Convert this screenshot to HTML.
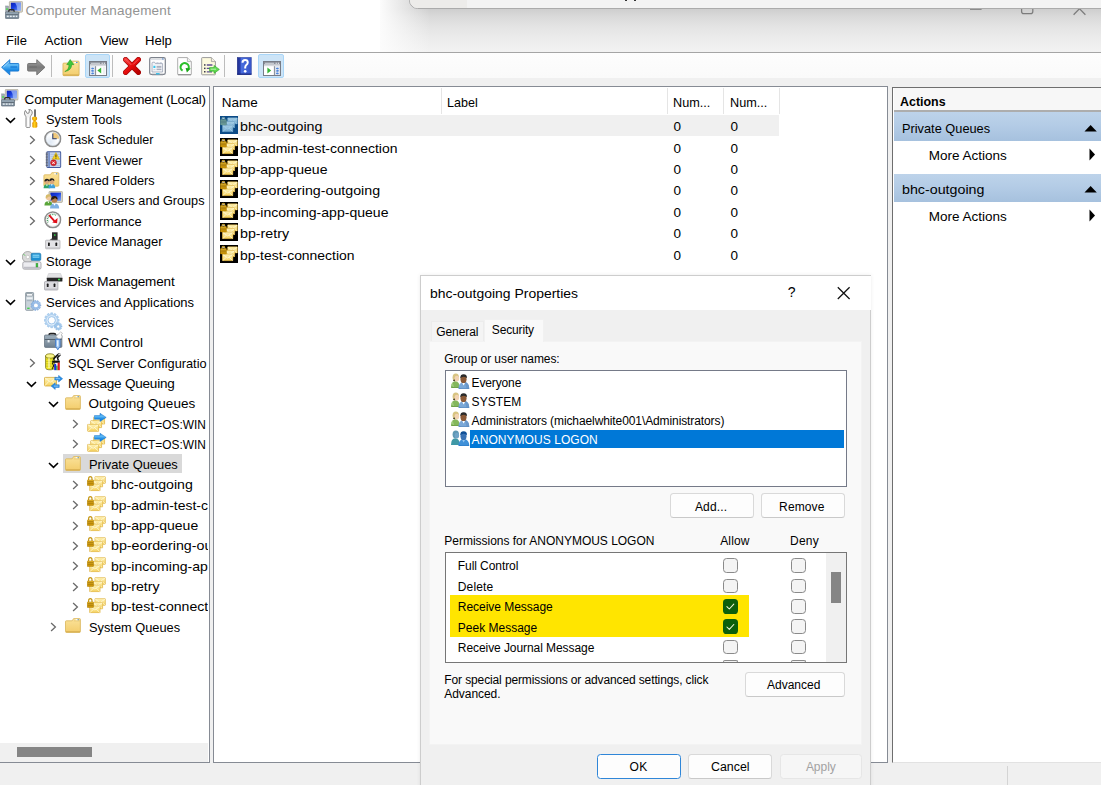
<!DOCTYPE html>
<html><head><meta charset="utf-8"><title>Computer Management</title>
<style>
html,body{margin:0;padding:0;}
body{width:1101px;height:785px;overflow:hidden;background:#fff;position:relative;font-family:"Liberation Sans",sans-serif;color:#000;}
.a{position:absolute;}
.t{position:absolute;white-space:pre;line-height:20px;height:20px;}
.clip{position:absolute;left:0;top:0;overflow:hidden;}
svg{position:absolute;overflow:visible;}
.btn{position:absolute;box-sizing:border-box;border:1px solid #d9d9d9;border-bottom-color:#c9c9c9;border-radius:3.5px;background:#fdfdfd;}
.cb{position:absolute;box-sizing:border-box;width:14.6px;height:14.6px;border:1.2px solid #8a8a8a;border-radius:3.6px;background:#f4f4f4;}
.cbg{position:absolute;box-sizing:border-box;width:14.6px;height:14.6px;border-radius:3.6px;background:#0c5f0c;}
</style></head><body>
<svg width="0" height="0" style="position:absolute;left:-10px;top:-10px">
<defs>
<linearGradient id="gScr" x1="0" y1="0" x2="1" y2="1"><stop offset="0" stop-color="#0a1fb8"/><stop offset=".45" stop-color="#1a3fe0"/><stop offset="1" stop-color="#7fa8f5"/></linearGradient>
<linearGradient id="gFold" x1="0" y1="0" x2="0" y2="1"><stop offset="0" stop-color="#fae29a"/><stop offset="1" stop-color="#f3cd6c"/></linearGradient>
<linearGradient id="gEnv" x1="0" y1="0" x2="0" y2="1"><stop offset="0" stop-color="#fff4b8"/><stop offset="1" stop-color="#f5d15c"/></linearGradient>
<linearGradient id="gEnvB" x1="0" y1="0" x2="0" y2="1"><stop offset="0" stop-color="#a8cfe4"/><stop offset="1" stop-color="#6fa5cc"/></linearGradient>
<linearGradient id="gBlueA" x1="0" y1="0" x2="0" y2="1"><stop offset="0" stop-color="#2c8ce0"/><stop offset=".35" stop-color="#62bcf7"/><stop offset=".7" stop-color="#1787e4"/><stop offset="1" stop-color="#2c8ce0"/></linearGradient>
<linearGradient id="gGrayA" x1="0" y1="0" x2="0" y2="1"><stop offset="0" stop-color="#a4a4a4"/><stop offset=".5" stop-color="#7a7a7a"/><stop offset="1" stop-color="#969696"/></linearGradient>
<linearGradient id="gHelp" x1="0" y1="0" x2="1" y2="0"><stop offset="0" stop-color="#1f2f8f"/><stop offset=".22" stop-color="#2a3fae"/><stop offset=".25" stop-color="#4a6fe0"/><stop offset="1" stop-color="#3553c8"/></linearGradient>
<linearGradient id="gRed" x1="0" y1="0" x2="1" y2="1"><stop offset="0" stop-color="#f43a3a"/><stop offset=".5" stop-color="#e60d0d"/><stop offset="1" stop-color="#b80000"/></linearGradient>
<linearGradient id="gLock" x1="0" y1="0" x2="0" y2="1"><stop offset="0" stop-color="#f0c030"/><stop offset="1" stop-color="#c89000"/></linearGradient>
<linearGradient id="gBox" x1="0" y1="0" x2="0" y2="1"><stop offset="0" stop-color="#9fb0bd"/><stop offset="1" stop-color="#6f8090"/></linearGradient>
<linearGradient id="gHand" x1="0" y1="0" x2="1" y2="0"><stop offset="0" stop-color="#e39300"/><stop offset=".45" stop-color="#ffd21a"/><stop offset="1" stop-color="#dd8a00"/></linearGradient>
<radialGradient id="gFace" cx=".35" cy=".7" r=".8"><stop offset="0" stop-color="#dfe9f5"/><stop offset=".6" stop-color="#fff"/><stop offset="1" stop-color="#fff"/></radialGradient>

<!-- chevrons -->
<symbol id="chd" viewBox="0 0 11 7"><path d="M1 1L5.5 5.4L10 1" fill="none" stroke="#000" stroke-width="1.6"/></symbol>
<symbol id="chr" viewBox="0 0 7 10"><path d="M1.1 1L5.4 5L1.1 9" fill="none" stroke="#6a6a6a" stroke-width="1.3"/></symbol>

<!-- computer management -->
<symbol id="cm" viewBox="0 0 18 18">
<rect x="4.4" y=".4" width="13.2" height="10.8" rx=".8" fill="#dbd7c8" stroke="#a8a496" stroke-width=".7"/>
<rect x="5.9" y="1.7" width="10.2" height="7.9" fill="url(#gScr)"/>
<path d="M10.2 1.7H16.1V9.6H12.4Q12.6 5 10.2 1.7Z" fill="#9db8f7" opacity=".75"/>
<rect x="9" y="11.2" width="5.5" height="1.4" fill="#8a8a8a"/>
<rect x=".6" y="5" width="3" height="6.4" fill="#a2abb4" stroke="#7d8790" stroke-width=".4"/><rect x="1.1" y="7.4" width="2" height="1.5" fill="#4fdc4f"/>
<path d="M3.8 11.2V10Q3.8 8.8 5 8.8H8Q9.2 8.8 9.2 10V11.2" fill="none" stroke="#2a2a2a" stroke-width="1.3"/>
<rect x=".4" y="11" width="13.4" height="6.7" rx=".8" fill="url(#gBox)" stroke="#5e6b77" stroke-width=".7"/>
<rect x=".8" y="13.4" width="12.6" height=".8" fill="#55616c"/>
<rect x="1.8" y="14.7" width="2" height="1.5" fill="#e8eef2"/><rect x="4.8" y="14.7" width="2" height="1.5" fill="#e8eef2"/><rect x="7.8" y="14.7" width="2" height="1.5" fill="#e8eef2"/><rect x="10.8" y="14.7" width="1.6" height="1.5" fill="#e8eef2"/>
</symbol>

<!-- system tools -->
<symbol id="tools" viewBox="0 0 14 19">
<path d="M2 17.6V8.6Q2 7.4 1.2 6.4Q.2 5 .5 3.2L1.4 1.4L3.2 4.4L5 4L5.4 1L4.6 .4Q7.6 .2 8.2 2.8Q8.6 5 7 6.6Q6.2 7.6 6.2 8.8V17.6Q6.2 18.7 4.1 18.7Q2 18.7 2 17.6Z" fill="#f1f1f1" stroke="#8a8a8a" stroke-width="1" stroke-linejoin="round"/>
<path d="M4.2 8.4V17.4" stroke="#fff" stroke-width="1.4"/>
<rect x="10.1" y=".4" width="1.8" height="7.6" fill="#646464"/>
<rect x="8.1" y="7.8" width="5" height="3.6" rx="1.4" fill="url(#gHand)"/>
<rect x="9.4" y="10.8" width="2.4" height="2.4" fill="#e8a000"/>
<rect x="8.3" y="12.6" width="5" height="6.2" rx="1.6" fill="url(#gHand)"/>
</symbol>

<!-- clock -->
<symbol id="clock" viewBox="0 0 18 18">
<circle cx="9" cy="9" r="8" fill="url(#gFace)" stroke="#8d8d8d" stroke-width="1.7"/>
<path d="M9 9V2.2A6.8 6.8 0 0 1 15.8 9Z" fill="#f0c97d"/>
<circle cx="9" cy="9" r="6.9" fill="none" stroke="#c9d3dd" stroke-width=".6"/>
<path d="M9 3.6V9H13" fill="none" stroke="#2a3a6a" stroke-width="1.1"/>
</symbol>

<!-- folder -->
<symbol id="folder" viewBox="0 0 16 15">
<path d="M.5 3.6Q.5 2.8 1.3 2.8H7.2L8.6 .6H14.6Q15.4 .6 15.4 1.4V13.6Q15.4 14.4 14.6 14.4H1.3Q.5 14.4 .5 13.6Z" fill="url(#gFold)" stroke="#d9b55a" stroke-width=".8"/>
<path d="M8.9 2.9H15" stroke="#e3c26a" stroke-width=".7"/>
<rect x="10.6" y="1.2" width="2.2" height="1" fill="#fff"/><rect x="12.6" y="1.2" width="1.2" height="1" fill="#3f8be0"/>
<path d="M1 13.8H15" stroke="#d2a84a" stroke-width=".9"/>
</symbol>
<!-- event viewer -->
<symbol id="evt" viewBox="0 0 17 18">
<rect x="1.8" y=".7" width="14.4" height="16.4" rx="1" fill="#c9d7ee" stroke="#42599c" stroke-width="1.1"/>
<rect x="3.4" y="1.3" width="1.4" height="15.2" fill="#5a76b8"/>
<g stroke="#9fb3da" stroke-width=".6"><path d="M5.5 3.5H15.5M5.5 5.8H15.5M5.5 8.1H15.5M5.5 10.4H15.5M5.5 12.7H15.5M5.5 15H15.5"/></g>
<g stroke="#555" stroke-width=".7"><path d="M.6 2.2H3M.6 3.8H3M.6 5.4H3M.6 7H3M.6 8.6H3M.6 10.2H3M.6 11.8H3M.6 13.4H3M.6 15H3"/></g>
<path d="M11.2 1.5L15 8.6H7.4Z" fill="#f6d21c" stroke="#c9a400" stroke-width=".5" stroke-linejoin="round"/>
<rect x="10.8" y="3.6" width=".9" height="2.8" fill="#222"/><rect x="10.8" y="7" width=".9" height=".9" fill="#222"/>
<circle cx="8.7" cy="12.2" r="3.1" fill="#d8242c" stroke="#a01018" stroke-width=".4"/>
<path d="M7.4 10.9L10 13.5M10 10.9L7.4 13.5" stroke="#fff" stroke-width="1"/>
</symbol>

<!-- person shapes are drawn inline per icon -->
<!-- shared folders -->
<symbol id="shared" viewBox="0 0 17 17">
<path d="M.9 3.6Q.9 2.8 1.7 2.8H7.4L8.8 .7H15Q15.8 .7 15.8 1.5V13.4Q15.8 14.2 15 14.2H1.7Q.9 14.2 .9 13.4Z" fill="url(#gFold)" stroke="#d9b55a" stroke-width=".8"/>
<rect x="11" y="1.3" width="2.2" height="1" fill="#fff"/><rect x="13" y="1.3" width="1.2" height="1" fill="#3f8be0"/>
<path d="M.6 16.3Q.6 12.2 3.9 12.2Q7.2 12.2 7.2 16.3Z" fill="#2fa56a"/>
<path d="M5.4 16.3Q5.4 12 8.8 12Q12.2 12 12.2 16.3Z" fill="#3f9fd8"/>
<path d="M2.9 12.4L3.9 14.2L4.9 12.4Z" fill="#fff"/><path d="M7.8 12.2L8.8 14L9.8 12.2Z" fill="#fff"/>
<circle cx="3.9" cy="9.8" r="2.4" fill="#d9a77c"/><path d="M1.4 9.6Q1.4 6.8 3.9 6.8Q6.4 6.8 6.4 9.4Q5 9 4.4 8.2Q3 9.4 1.4 9.6Z" fill="#1d1d1d"/>
<circle cx="8.8" cy="9.4" r="2.5" fill="#d9a77c"/><path d="M6.2 9.2Q6.2 6.3 8.8 6.3Q11.4 6.3 11.4 9Q10 8.6 9.4 7.8Q7.9 9 6.2 9.2Z" fill="#1d1d1d"/>
</symbol>

<!-- local users and groups -->
<symbol id="lusr" viewBox="0 0 19 18">
<rect x="5" y=".4" width="13.4" height="11" rx=".8" fill="#d9d5c6" stroke="#a39f90" stroke-width=".7"/>
<rect x="6.4" y="1.6" width="10.6" height="8.2" fill="url(#gScr)"/>
<path d="M.4 14.6Q.4 10.2 4.4 10.2Q8.4 10.2 8.4 14.6Z" fill="#5aa63a"/>
<circle cx="4.6" cy="6.6" r="2.7" fill="#f0c9a0"/><path d="M1.7 7.4Q1.2 3.2 4.6 3.2Q8 3.2 7.4 7Q6 6.4 5.2 5.2Q3.6 6.8 1.7 7.4Z" fill="#d6bb6a"/>
<path d="M3.4 10.4L4.4 12.2L5.4 10.4Z" fill="#fff"/>
<path d="M6 17.6Q6 12.4 10.6 12.4Q15.2 12.4 15.2 17.6Z" fill="#7eb0e2"/>
<circle cx="10.4" cy="8.8" r="3" fill="#b9804f"/><path d="M7.2 9Q7 5 10.4 5Q13.8 5 13.6 8.6Q12 8.2 11.2 7Q9.4 8.6 7.2 9Z" fill="#2a1a10"/>
<path d="M9.2 12.6L10.5 14.8L11.8 12.6Z" fill="#fff"/>
</symbol>

<!-- performance -->
<symbol id="perf" viewBox="0 0 18 18">
<circle cx="9" cy="9" r="8" fill="#fff" stroke="#8d8d8d" stroke-width="1.6"/>
<circle cx="9" cy="9" r="6.7" fill="none" stroke="#d8d8d8" stroke-width=".6"/>
<path d="M4.2 11.6A5.6 5.6 0 0 1 12.6 4.6" fill="none" stroke="#3f9a5a" stroke-width="1.5" stroke-dasharray=".8 .9"/>
<path d="M5.2 4.2L11.6 11.4" stroke="#e0101a" stroke-width="1.9"/>
<path d="M13.9 7.2L13.4 12.6L8.4 11.7Z" fill="#e0101a"/>
</symbol>

<!-- device manager -->
<symbol id="dev" viewBox="0 0 16 18">
<rect x="7" y=".3" width="5.6" height="8.6" fill="#2b2b2b"/><rect x="9" y="2.3" width="1.5" height="1.5" fill="#35d04a"/>
<path d="M4 8.4L7 6.2V8.6Z" fill="#444"/>
<rect x=".6" y="8.2" width="14.4" height="8.6" rx=".7" fill="#e3e3e6" stroke="#a9a9ad" stroke-width=".7"/>
<rect x="3" y="10.6" width="1.8" height="3.4" rx=".6" fill="#1d1d1d"/><rect x="10.4" y="10.6" width="1.8" height="3.4" rx=".6" fill="#1d1d1d"/>
<rect x=".9" y="15.4" width="13.8" height="1.2" fill="#c2c2c6"/>
</symbol>

<!-- storage -->
<symbol id="stor" viewBox="0 0 20 19">
<circle cx="5.8" cy="6" r="5.5" fill="#d9d9d9" stroke="#9a9a9a" stroke-width=".8"/><circle cx="5.8" cy="6" r="1.7" fill="#fff" stroke="#aaa" stroke-width=".5"/>
<path d="M1.6 3.2L3 4.6" stroke="#4fc84f" stroke-width="1"/>
<rect x="9.2" y="2.2" width="9.6" height="7.4" rx="1.4" fill="#1f8fd0" stroke="#1670a8" stroke-width=".6"/>
<rect x="10.6" y="3.6" width="6.8" height="3.2" fill="#7fd0f2"/><rect x="10.6" y="4.9" width="6.8" height=".6" fill="#2a9ad8"/>
<rect x=".8" y="10.8" width="18.2" height="7.4" rx="1.6" fill="#ececf0" stroke="#9a9aa0" stroke-width=".8"/>
<rect x="1.4" y="15.8" width="17" height="2" rx="1" fill="#bfbfc6"/>
<rect x="14" y="12.4" width="1.9" height="3.6" fill="#3fc83f" stroke="#2a7a2a" stroke-width=".4"/>
</symbol>

<!-- disk management -->
<symbol id="disk" viewBox="0 0 19 18">
<path d="M4.6 .5H16.6L18.4 5H2.8Z" fill="#e2e2e4" stroke="#c2c2c6" stroke-width=".5"/>
<rect x="2.8" y="4.8" width="15.6" height="3.6" rx=".5" fill="#262626"/><rect x="14" y="5.7" width="2.2" height="1.6" fill="#35d04a"/>
<rect x=".5" y="8.6" width="13.4" height="8.4" rx=".7" fill="#dcdce0" stroke="#9c9ca2" stroke-width=".7"/>
<rect x="2.8" y="10.6" width="1.8" height="3.4" rx=".6" fill="#1d1d1d"/><rect x="9.6" y="10.6" width="1.8" height="3.4" rx=".6" fill="#1d1d1d"/>
<rect x=".8" y="15.6" width="12.8" height="1.2" fill="#bcbcc2"/>
</symbol>
<!-- services -->
<symbol id="svc" viewBox="0 0 19 19">
<path d="M15.14 7.32L15.14 9.28L13.61 9.33L13.33 10.36L14.63 11.17L13.65 12.87L12.30 12.15L11.55 12.90L12.27 14.25L10.57 15.23L9.76 13.93L8.73 14.21L8.68 15.74L6.72 15.74L6.67 14.21L5.64 13.93L4.83 15.23L3.13 14.25L3.85 12.90L3.10 12.15L1.75 12.87L0.77 11.17L2.07 10.36L1.79 9.33L0.26 9.28L0.26 7.32L1.79 7.27L2.07 6.24L0.77 5.43L1.75 3.73L3.10 4.45L3.85 3.70L3.13 2.35L4.83 1.37L5.64 2.67L6.67 2.39L6.72 0.86L8.68 0.86L8.73 2.39L9.76 2.67L10.57 1.37L12.27 2.35L11.55 3.70L12.30 4.45L13.65 3.73L14.63 5.43L13.33 6.24L13.61 7.27ZM11.40 8.30A3.7 3.7 0 1 0 4.00 8.30A3.7 3.7 0 1 0 11.40 8.30Z" fill="#b4d3f0" stroke="#8dbbe6" stroke-width=".5" fill-rule="evenodd"/>
<circle cx="7.7" cy="8.3" r="4.6" fill="none" stroke="#e4f0fb" stroke-width="1.1"/>
<circle cx="7.7" cy="8.3" r="3.7" fill="none" stroke="#8dbbe6" stroke-width=".5"/>
<path d="M18.04 13.72L18.04 15.08L17.02 15.06L16.79 15.71L17.58 16.35L16.71 17.39L15.94 16.72L15.34 17.07L15.53 18.06L14.20 18.30L14.04 17.30L13.36 17.18L12.87 18.06L11.69 17.39L12.21 16.51L11.77 15.99L10.82 16.35L10.36 15.08L11.32 14.74L11.32 14.06L10.36 13.72L10.82 12.45L11.77 12.81L12.21 12.29L11.69 11.41L12.87 10.74L13.36 11.62L14.04 11.50L14.20 10.50L15.53 10.74L15.34 11.73L15.94 12.08L16.71 11.41L17.58 12.45L16.79 13.09L17.02 13.74ZM15.70 14.40A1.5 1.5 0 1 0 12.70 14.40A1.5 1.5 0 1 0 15.70 14.40Z" fill="#a6caec" stroke="#7fb0e0" stroke-width=".4" fill-rule="evenodd"/>
</symbol>

<!-- services and applications -->
<symbol id="svcapp" viewBox="0 0 17 19">
<rect x=".6" y=".5" width="8" height="17.8" rx=".8" fill="#c9d3da" stroke="#7d8b96" stroke-width=".8"/>
<rect x="1.7" y="1.8" width="5.8" height="2.2" fill="#f4f7f9" stroke="#55616b" stroke-width=".4"/>
<rect x="1.7" y="5.4" width="5.8" height="1.6" fill="#eef2f5"/><rect x="1.7" y="8" width="5.8" height="1.2" fill="#aab6c0"/>
<rect x="2.2" y="15.6" width="2.4" height="1.4" fill="#3fd04a"/>
<path d="M15.85 12.69L15.85 14.11L14.53 14.09L14.33 14.78L15.45 15.48L14.68 16.67L13.58 15.95L13.04 16.42L13.60 17.61L12.31 18.20L11.78 16.99L11.07 17.10L10.90 18.40L9.49 18.20L9.70 16.90L9.04 16.60L8.20 17.61L7.12 16.67L8.00 15.69L7.61 15.09L6.35 15.48L5.95 14.11L7.22 13.76L7.22 13.04L5.95 12.69L6.35 11.32L7.61 11.71L8.00 11.11L7.12 10.13L8.20 9.19L9.04 10.20L9.70 9.90L9.49 8.60L10.90 8.40L11.07 9.70L11.78 9.81L12.31 8.60L13.60 9.19L13.04 10.38L13.58 10.85L14.68 10.13L15.45 11.32L14.33 12.02L14.53 12.71ZM12.80 13.40A1.9 1.9 0 1 0 9.00 13.40A1.9 1.9 0 1 0 12.80 13.40Z" fill="#9dc0ea" stroke="#6f9cd4" stroke-width=".5" fill-rule="evenodd"/>
<circle cx="10.9" cy="13.4" r="1.9" fill="#fff"/>
</symbol>

<!-- wmi control -->
<symbol id="wmi" viewBox="0 0 19 20">
<path d="M5 4.2Q5 2.6 6.6 2.6H10Q11.6 2.6 11.6 4.2" fill="none" stroke="#222" stroke-width="1.6"/>
<rect x=".5" y="4" width="17.4" height="12.4" rx="1" fill="url(#gBox)" stroke="#5b6a78" stroke-width=".7"/>
<rect x=".8" y="8" width="16.8" height="1" fill="#55626e"/>
<rect x="3.6" y="9" width="2" height="2.4" fill="#e9eef2"/>
<path d="M12 5.4L16.8 .8L18.6 2.4L17.4 3.2L18.2 6.4L15 8.4Z" fill="#fafafa" stroke="#9a9a9a" stroke-width=".5"/>
<path d="M11.6 8.2H16V15.4L13.8 18.8L11.6 15.4Z" fill="#9cc4f0" stroke="#3f78c8" stroke-width=".9"/>
<rect x="13" y="9.4" width="1.4" height="6" fill="#e6f1fc"/>
</symbol>

<!-- sql server config -->
<symbol id="sql" viewBox="0 0 16 18">
<path d="M.6 3V14.6Q.6 16.8 5 16.8Q9.4 16.8 9.4 14.6V3Z" fill="#f2ea2c" stroke="#6a6400" stroke-width=".7"/>
<ellipse cx="5" cy="3" rx="4.4" ry="2.2" fill="#fbf68a" stroke="#6a6400" stroke-width=".7"/>
<g stroke="#b8b010" stroke-width=".6"><path d="M1 6H9M1 8.4H9M1 10.8H9M1 13.2H9"/></g>
<rect x="3.4" y="5" width="1.2" height="10" fill="#fffde0" opacity=".8"/>
<path d="M8.2 6.4L11 3.4L13.6 1L14.8 2.2L12.4 4.8L13.4 7.6" fill="none" stroke="#111" stroke-width="1.5"/>
<rect x="13.2" y=".4" width="1.8" height="1.8" fill="#fff" stroke="#555" stroke-width=".4"/>
<rect x="7.2" y="7.6" width="7.6" height="2.2" fill="#111"/>
<rect x="9.2" y="10.8" width="2" height="6.4" fill="#1a2fe0"/><rect x="11.2" y="12.6" width="1.4" height="4.6" fill="#18a058"/><rect x="12.6" y="9.6" width="2.2" height="7.6" fill="#e0161c"/>
<path d="M7.4 9.8L8.6 13L7 16" stroke="#111" stroke-width="1" fill="none"/>
</symbol>

<!-- message queuing -->
<symbol id="msmq" viewBox="0 0 19 16">
<rect x=".5" y="2.4" width="12" height="8.6" rx=".6" fill="url(#gEnv)" stroke="#d6a93a" stroke-width=".8"/>
<path d="M1 3L6.5 7L12 3M1 10.6L5 6.2M12 10.6L8 6.2" fill="none" stroke="#fff7d0" stroke-width=".9"/>
<path d="M10.8 2.4H14.6V.4L18.6 3.7L14.6 7V5H10.8Z" fill="#2a8fe6" stroke="#1670c8" stroke-width=".5" stroke-linejoin="round"/>
<path d="M11.6 3.7H16" stroke="#bfe2fb" stroke-width=".7"/>
<path d="M15.2 9.8H11.2V7.8L7.2 11.1L11.2 14.4V12.4H15.2Z" fill="#2a8fe6" stroke="#1670c8" stroke-width=".5" stroke-linejoin="round"/>
<path d="M10 11.1H14.4" stroke="#bfe2fb" stroke-width=".7"/>
</symbol>

<!-- envelope (unit) -->
<symbol id="env" viewBox="0 0 12 8">
<rect x=".4" y=".4" width="11.2" height="7.2" rx=".5" fill="url(#gEnv)" stroke="#dcae3c" stroke-width=".8"/>
<path d="M.9 1L6 4.6L11.1 1M.9 7.2L4.6 3.8M11.1 7.2L7.4 3.8" fill="none" stroke="#fff9dc" stroke-width=".8"/>
</symbol>
<symbol id="envb" viewBox="0 0 12 8">
<rect x=".4" y=".4" width="11.2" height="7.2" rx=".5" fill="url(#gEnvB)" stroke="#5f95bd" stroke-width=".8"/>
<path d="M.9 1L6 4.6L11.1 1M.9 7.2L4.6 3.8M11.1 7.2L7.4 3.8" fill="none" stroke="#9fd0ee" stroke-width=".8"/>
</symbol>

<!-- outgoing queue -->
<symbol id="outq" viewBox="0 0 20 19">
<use href="#env" x="6.2" y="3.6" width="12" height="8"/>
<use href="#env" x="3.2" y="7.2" width="12" height="8"/>
<use href="#env" x=".2" y="10.8" width="12" height="8"/>
<path d="M7.4 2.6H13V.3L19.2 4.4L13 8.5V6.2H7.4Z" fill="url(#gBlueA)" stroke="#1a72c8" stroke-width=".5" stroke-linejoin="round"/>
</symbol>

<!-- private queue (lock + envelopes) -->
<symbol id="privq" viewBox="0 0 19 16">
<use href="#env" x="7.4" y=".2" width="11.4" height="7.6"/>
<use href="#env" x="4.8" y="3.8" width="11.4" height="7.6"/>
<use href="#env" x="2.2" y="7.6" width="11.4" height="7.6"/>
<path d="M1.6 4.4V2.8Q1.6 .7 3.3 .7Q5 .7 5 2.8V4.4" fill="none" stroke="#c79a1a" stroke-width="1.2"/>
<rect x=".2" y="4" width="6.3" height="5.4" rx=".5" fill="url(#gLock)" stroke="#a87800" stroke-width=".5"/>
<path d="M.6 5.6H6.2M.6 7.2H6.2" stroke="#8a6200" stroke-width=".6"/>
</symbol>

<!-- list queue icon (black bg) -->
<symbol id="listq" viewBox="0 0 18 18">
<rect width="18" height="18" fill="#000"/>
<use href="#env" x="7.2" y="1.2" width="10.6" height="7.4"/>
<use href="#env" x="4.6" y="4.8" width="10.6" height="7.4"/>
<use href="#env" x="2" y="8.6" width="11.4" height="7.6"/>
<path d="M2 3.8V3Q2 1.3 3.4 1.3Q4.8 1.3 4.8 3V3.8" fill="none" stroke="#c79a1a" stroke-width="1.1"/>
<rect x=".3" y="3.6" width="6.2" height="5.4" rx=".4" fill="url(#gLock)" stroke="#a87800" stroke-width=".4"/>
<path d="M.6 5.2H6.2M.6 6.8H6.2" stroke="#7a5600" stroke-width=".6"/>
<rect x="2.4" y="1.8" width="2" height="1.2" fill="#fff" opacity=".7"/>
</symbol>
<symbol id="listqb" viewBox="0 0 18 18">
<rect width="18" height="18" fill="#0b4a86"/>
<use href="#envb" x="7.2" y="1.2" width="10.6" height="7.4"/>
<use href="#envb" x="4.6" y="4.8" width="10.6" height="7.4"/>
<use href="#envb" x="2" y="8.6" width="11.4" height="7.6"/>
<path d="M2 3.8V3Q2 1.3 3.4 1.3Q4.8 1.3 4.8 3V3.8" fill="none" stroke="#5f8f9a" stroke-width="1.1"/>
<rect x=".3" y="3.6" width="6.2" height="5.4" rx=".4" fill="#6f9f98" stroke="#4a7a80" stroke-width=".4"/>
<path d="M.6 5.2H6.2M.6 6.8H6.2" stroke="#3f6a78" stroke-width=".6"/>
<rect x="2.4" y="1.8" width="2" height="1.2" fill="#cfe4f2" opacity=".8"/>
</symbol>

<!-- users (dialog) -->
<symbol id="usr" viewBox="0 0 19 17">
<path d="M0 15.3Q0 8.7 4.4 8.4Q8.9 8.7 8.9 15.3Z" fill="#84b75c"/>
<path d="M0 15.3Q0 11 1.6 9.4L3.4 15.3Z" fill="#9fcb7c"/>
<path d="M.4 15.3H8.9V13.8Q4 15.4 .4 13.6Z" fill="#6fa04a"/>
<ellipse cx="4.9" cy="4.5" rx="3.3" ry="4" fill="#d8c482"/>
<ellipse cx="6" cy="5.6" rx="2.3" ry="2.9" fill="#f2d3b3"/>
<path d="M2 7.6Q3 8.8 4.2 8.2L3.4 6.4Z" fill="#3a3320"/>
<path d="M7.6 16.3Q7.6 9.5 13 9.2Q18.7 9.5 18.7 16.3Z" fill="#7ba8d7"/>
<path d="M14 9.3Q18.7 9.8 18.7 16.3H16Z" fill="#6a98cb"/>
<path d="M8 16.3H18.7V14.8Q13 16.6 8 14.8Z" fill="#5f8fc4"/>
<ellipse cx="12.8" cy="6.3" rx="3.1" ry="4.2" fill="#8c5a37"/>
<path d="M9.5 5.6Q9.2 1.2 12.9 1.2Q16.6 1.2 16.3 5.4Q15.4 3.8 13 3.8Q10.4 3.8 9.5 5.6Z" fill="#2b2b2b"/>
<path d="M11.5 10.2L12.9 12.8L14.3 10.2Z" fill="#fff"/>
</symbol>
<symbol id="usrb" viewBox="0 0 19 17">
<path d="M0 15.3Q0 8.7 4.4 8.4Q8.9 8.7 8.9 15.3Z" fill="#3f98a6"/>
<ellipse cx="4.9" cy="4.5" rx="3.3" ry="4" fill="#5f98b4"/>
<ellipse cx="6" cy="5.6" rx="2.3" ry="2.9" fill="#6fa3c6"/>
<path d="M7.6 16.3Q7.6 9.5 13 9.2Q18.7 9.5 18.7 16.3Z" fill="#3f90d8"/>
<path d="M8 16.3H18.7V14.8Q13 16.6 8 14.8Z" fill="#2f7fca"/>
<ellipse cx="12.8" cy="6.3" rx="3.1" ry="4.2" fill="#3a72b4"/>
<path d="M9.5 5.6Q9.2 1.2 12.9 1.2Q16.6 1.2 16.3 5.4Q15.4 3.8 13 3.8Q10.4 3.8 9.5 5.6Z" fill="#0f4f96"/>
<path d="M11.5 10.2L12.9 12.8L14.3 10.2Z" fill="#8fc4f0"/>
</symbol>
<!-- toolbar: back / forward -->
<symbol id="tback" viewBox="0 0 19 17">
<path d="M.6 8.5L9 .7V4.6H17.4Q18.4 4.6 18.4 5.6V11.4Q18.4 12.4 17.4 12.4H9V16.3Z" fill="url(#gBlueA)" stroke="#1a78d0" stroke-width=".9" stroke-linejoin="round"/>
<path d="M9.6 8.2H16.6" stroke="#0a6fd0" stroke-width="2.2" opacity=".55"/>
<path d="M2.4 8.3L8.2 3" stroke="#9fd6fb" stroke-width=".9" fill="none"/>
</symbol>
<symbol id="tfwd" viewBox="0 0 19 17">
<path d="M18.4 8.5L10 .7V4.6H1.6Q.6 4.6 .6 5.6V11.4Q.6 12.4 1.6 12.4H10V16.3Z" fill="url(#gGrayA)" stroke="#6c6c6c" stroke-width=".9" stroke-linejoin="round"/>
<path d="M2.4 8.2H10" stroke="#6a6a6a" stroke-width="2" opacity=".5"/>
</symbol>
<!-- folder up -->
<symbol id="tup" viewBox="0 0 17 17">
<path d="M.9 4.6Q.9 3.8 1.7 3.8H7.4L8.8 2H15Q15.8 2 15.8 2.8V14.6Q15.8 15.4 15 15.4H1.7Q.9 15.4 .9 14.6Z" fill="url(#gFold)" stroke="#d9b55a" stroke-width=".8"/>
<rect x="11.2" y="2.7" width="2" height="1" fill="#fff"/><rect x="13" y="2.7" width="1.3" height="1" fill="#3f8be0"/>
<path d="M1.2 14.8H15.6" stroke="#d2a84a" stroke-width="1"/>
<path d="M2.6 11.6Q6.6 9.6 6.4 5.2H4.4L7.6 .5L11 5.2H8.9Q9 10.4 2.6 11.6Z" fill="#3fc63a" stroke="#259a22" stroke-width=".5" stroke-linejoin="round"/>
</symbol>
<!-- console tree toggle -->
<symbol id="ttree" viewBox="0 0 18 15">
<rect x=".5" y=".5" width="17" height="14" fill="#fff" stroke="#777c86" stroke-width="1"/>
<rect x="1" y="1" width="16" height="2.6" fill="#8a8f99"/><path d="M2 2.3H11" stroke="#e6e8ec" stroke-width=".8"/><rect x="12.6" y="1.7" width="1.2" height="1.2" fill="#e6e8ec"/><rect x="14.8" y="1.7" width="1.2" height="1.2" fill="#e6e8ec"/>
<rect x="1" y="3.6" width="16" height="1.6" fill="#d6d9de"/>
<rect x="1" y="5.2" width="5.4" height="8.8" fill="#dbe3ee"/><path d="M6.6 5.2V14" stroke="#777c86" stroke-width=".9"/>
<g fill="#2a6fd8"><path d="M2 7.2H3.4V6.4L5.2 7.5L3.4 8.6V7.8H2Z"/><path d="M2 9.6H3.4V8.8L5.2 9.9L3.4 11V10.2H2Z"/><path d="M2 12H3.4V11.2L5.2 12.3L3.4 13.4V12.6H2Z"/></g>
<path d="M12.2 6.4V12.6L8.4 9.5Z" fill="#35b535"/>
<rect x="13.8" y="6" width="2.6" height="7.4" fill="#eef0f2"/>
</symbol>
<symbol id="tact" viewBox="0 0 18 15">
<rect x=".5" y=".5" width="17" height="14" fill="#fff" stroke="#777c86" stroke-width="1"/>
<rect x="1" y="1" width="16" height="2.6" fill="#8a8f99"/><path d="M2 2.3H11" stroke="#e6e8ec" stroke-width=".8"/><rect x="12.6" y="1.7" width="1.2" height="1.2" fill="#e6e8ec"/><rect x="14.8" y="1.7" width="1.2" height="1.2" fill="#e6e8ec"/>
<rect x="1" y="3.6" width="16" height="1.6" fill="#d6d9de"/>
<rect x="11.6" y="5.2" width="5.4" height="8.8" fill="#dbe3ee"/><path d="M11.4 5.2V14" stroke="#777c86" stroke-width=".9"/>
<g fill="#2a6fd8"><path d="M16 7.2H14.6V6.4L12.8 7.5L14.6 8.6V7.8H16Z"/><path d="M16 9.6H14.6V8.8L12.8 9.9L14.6 11V10.2H16Z"/><path d="M16 12H14.6V11.2L12.8 12.3L14.6 13.4V12.6H16Z"/></g>
<path d="M4.4 6.4V12.6L8.2 9.5Z" fill="#35b535"/>
</symbol>
<!-- delete -->
<symbol id="tdel" viewBox="0 0 18 18">
<path d="M2.6 2.6L15.4 15.4M15.4 2.6L2.6 15.4" stroke="#a00808" stroke-width="5.2" stroke-linecap="round"/>
<path d="M2.6 2.6L15.4 15.4M15.4 2.6L2.6 15.4" stroke="url(#gRed)" stroke-width="4" stroke-linecap="round"/>
<path d="M2.8 2.4L8 7.6M15 2.6L10.4 7.2" stroke="#ff7a7a" stroke-width="1" stroke-linecap="round" opacity=".7"/>
</symbol>
<!-- properties -->
<symbol id="tprop" viewBox="0 0 17 19">
<rect x=".7" y=".7" width="15.6" height="16.6" rx="1.6" fill="#fff" stroke="#7d828c" stroke-width="1.2"/>
<path d="M1.4 2.6H15.6" stroke="#c9cdd6" stroke-width=".7"/><rect x="13" y="1.5" width="1.6" height=".9" fill="#3f78c8"/>
<path d="M3 15V6.2Q3 5.2 4 5.2H5.6L6.4 6.6H13.6V15Z" fill="#f3f5f9" stroke="#9aa2b4" stroke-width=".8"/>
<rect x="7.4" y="5.4" width="2.2" height="1.2" fill="#aeb6c8"/><rect x="10.6" y="5.4" width="2.2" height="1.2" fill="#aeb6c8"/>
<rect x="4.4" y="8.8" width="2" height="2.2" fill="#35c6f0"/><rect x="4.4" y="12" width="2" height="1.2" fill="#d0d4dc"/>
<path d="M7.6 9.4H12.4M7.6 10.8H12.4M7.6 12.6H12.4" stroke="#8f96a6" stroke-width=".8"/>
<rect x="7" y="16.2" width="3.6" height="1.6" fill="#1fb8e8"/>
<path d="M3 17.9H14" stroke="#9a9ea8" stroke-width=".8"/>
</symbol>
<!-- refresh -->
<symbol id="tref" viewBox="0 0 16 19">
<path d="M.7 1.2Q.7 .6 1.3 .6H10.4L14.3 4.6V17.2Q14.3 17.8 13.7 17.8H1.3Q.7 17.8 .7 17.2Z" fill="#fff" stroke="#adadad" stroke-width="1"/>
<path d="M1 17.7H14" stroke="#8f8f8f" stroke-width="1"/>
<path d="M10.4 .6V4.6H14.3" fill="#eee" stroke="#a8a8a8" stroke-width=".8"/>
<path d="M5.6 13.7A4.1 4.1 0 1 1 11.3 12.1" fill="none" stroke="#2cc02c" stroke-width="2.1"/>
<path d="M13.7 11.6L8.6 11L9.9 15.4Z" fill="#16a516"/>
</symbol>
<!-- export list -->
<symbol id="texp" viewBox="0 0 19 19">
<path d="M.7 1.2Q.7 .6 1.3 .6H10.4L14.4 4.6V17.2Q14.4 17.8 13.8 17.8H1.3Q.7 17.8 .7 17.2Z" fill="#fdfade" stroke="#9a9a9a" stroke-width="1"/>
<path d="M10.4 .6V4.6H14.4" fill="#f2f0e0" stroke="#9a9a9a" stroke-width=".8"/>
<g fill="#3a3a4a"><rect x="3" y="7.2" width="1.5" height="1.5"/><rect x="3" y="10.6" width="1.5" height="1.5"/><rect x="3" y="14" width="1.5" height="1.5"/></g>
<g stroke="#5d4f94" stroke-width="1.3"><path d="M5.8 8H11.4M5.8 11.4H9M5.8 14.8H11"/></g>
<path d="M8.6 10.6H13V8.4L18.4 12.4L13 16.4V14.2H8.6Z" fill="#5fd84f" stroke="#2fa82a" stroke-width=".6" stroke-linejoin="round"/>
<path d="M9.6 12.2H15" stroke="#c6f5bf" stroke-width=".9"/>
</symbol>
<!-- help -->
<symbol id="thelp" viewBox="0 0 15 18">
<rect x=".2" y=".2" width="14.6" height="17.6" fill="url(#gHelp)" stroke="#1b2a7f" stroke-width=".4"/>
<rect x=".2" y="16.6" width="14.6" height="1.2" fill="#1b2a7f"/>
<path d="M5.6 5.6Q5.6 2.8 8.2 2.8Q10.9 2.8 10.9 5.3Q10.9 6.8 9.4 8Q8.3 8.9 8.3 10.6V11.4" fill="none" stroke="#fff" stroke-width="2"/>
<circle cx="8.3" cy="14.4" r="1.35" fill="#fff"/>
</symbol>
</defs></svg>
<!-- main window chrome -->
<div class="a" style="left:0;top:0;width:1101px;height:52px;background:#fff"></div>
<!-- shadow of overlapping window at top -->
<div class="a" style="left:380px;top:0;width:721px;height:52px;background:linear-gradient(to bottom,#cbcbcb 0px,#cecece 9px,#dadada 17px,#e4e4e4 27px,#ececec 39px,#f2f2f2 52px)"></div>
<div class="a" style="left:380px;top:0;width:50px;height:52px;background:linear-gradient(to right,#fcfcfc 0,rgba(252,252,252,0.6) 40%,rgba(252,252,252,0) 100%)"></div>
<!-- caption buttons (partially hidden) -->
<svg style="left:960px;top:0" width="141" height="30" viewBox="0 0 141 30"><g fill="none" stroke="#7c7c7c" stroke-width="1.25">
<path d="M10 9.2H21.6"/><rect x="61.6" y="2.4" width="11.2" height="11.2" rx="2.2"/><path d="M113.6 2.6L125.4 14.8M125.4 2.6L113.6 14.8"/></g></svg>
<!-- overlapping window bottom edge -->
<div class="a" style="left:409px;top:-12px;width:720px;height:20.5px;background:#f3f3f3;border:1px solid #ababab;border-radius:0 0 0 8.5px;box-sizing:border-box"></div>
<div class="a" style="left:410px;top:0;width:57px;height:7.5px;background:#edecea;border-radius:0 0 0 7.5px"></div>
<div class="a" style="left:625px;top:0;width:1.8px;height:1.3px;background:#333"></div>
<div class="a" style="left:634px;top:0;width:1.8px;height:1.3px;background:#333"></div>
<!-- menu / toolbar -->
<div class="a" style="left:0;top:52px;width:1101px;height:1px;background:#a5a5a5"></div>
<div class="a" style="left:0;top:53px;width:1101px;height:25px;background:linear-gradient(#fdfdfd,#fafafa)"></div>
<div class="a" style="left:0;top:78px;width:1101px;height:707px;background:#f0f0f0"></div>
<!-- toolbar highlighted buttons & separators -->
<div class="a" style="left:85px;top:54px;width:25px;height:24px;box-sizing:border-box;background:#cce4f7;border:1px solid #a9d6f8;border-radius:2px"></div>
<div class="a" style="left:258px;top:54px;width:26px;height:24px;box-sizing:border-box;background:#cce4f7;border:1px solid #a9d6f8;border-radius:2px"></div>
<div class="a" style="left:50.5px;top:55px;width:1px;height:22px;background:#bcbcbc"></div>
<div class="a" style="left:111.5px;top:55px;width:1px;height:22px;background:#bcbcbc"></div>
<div class="a" style="left:224px;top:55px;width:1px;height:22px;background:#bcbcbc"></div>
<!-- panes -->
<div class="a" style="left:-2px;top:86px;width:212px;height:677px;box-sizing:border-box;background:#fff;border:1.4px solid #868b94"></div>
<div class="a" style="left:213px;top:86px;width:675.4px;height:677px;box-sizing:border-box;background:#fff;border:1.4px solid #868b94"></div>
<div class="a" style="left:892.2px;top:86.6px;width:215px;height:676.4px;box-sizing:border-box;background:#fff;border:1.7px solid #6e6e6e;border-bottom:1.5px solid #e2e2e2"></div>
<div class="a" style="left:1007.2px;top:766px;width:1px;height:19px;background:#d4d4d4"></div>
<!-- tree selection + scrollbar -->
<div class="a" style="left:63px;top:453.6px;width:118.6px;height:19.5px;background:#d9d9d9"></div>
<div class="a" style="left:0;top:742.5px;width:207.5px;height:19px;background:#f0f0f0"></div>
<div class="a" style="left:16.8px;top:746.6px;width:75.5px;height:10.8px;background:#858585"></div>
<!-- list header/selection -->
<div class="a" style="left:238.3px;top:115px;width:540.7px;height:21px;background:#f0f0f0"></div>
<div class="a" style="left:440.5px;top:88px;width:1px;height:26px;background:#e5e5e5"></div>
<div class="a" style="left:666.5px;top:88px;width:1px;height:26px;background:#e5e5e5"></div>
<div class="a" style="left:723px;top:88px;width:1px;height:26px;background:#e5e5e5"></div>
<div class="a" style="left:779px;top:88px;width:1px;height:26px;background:#e5e5e5"></div>
<!-- actions pane -->
<div class="a" style="left:894px;top:88px;width:207px;height:23px;background:#f7f7f7"></div>
<div class="a" style="left:894px;top:110.2px;width:207px;height:1.5px;background:#adadad"></div>
<div class="a" style="left:894px;top:112px;width:207px;height:28.5px;background:linear-gradient(#bdd3ea,#b4cce6 45%,#a6c1de)"></div>
<div class="a" style="left:894px;top:173.5px;width:207px;height:28px;background:linear-gradient(#bdd3ea,#b4cce6 45%,#a6c1de)"></div>
<svg style="left:1080px;top:120px" width="21" height="110" viewBox="0 0 21 110"><g fill="#000">
<path d="M4.5 11.5L10.6 5L16.8 11.5Z"/><path d="M9.5 28.5L15 34.5L9.5 40.5Z"/>
<path d="M4.5 72.5L10.6 66L16.8 72.5Z"/><path d="M9.5 89.5L15 95.5L9.5 101.5Z"/></g></svg>
<span class="t" style="left:25.5px;top:1.4px;font-size:13.5px;letter-spacing:0.19px;color:#939393;">Computer Management</span>
<span class="t" style="left:6.4px;top:30.7px;font-size:13.5px;transform:scaleX(0.9602);transform-origin:0 50%;">File</span>
<span class="t" style="left:44.4px;top:30.7px;font-size:13.5px;letter-spacing:0.07px;">Action</span>
<span class="t" style="left:100.0px;top:30.7px;font-size:13.5px;letter-spacing:-0.24px;">View</span>
<span class="t" style="left:145.4px;top:30.7px;font-size:13.5px;transform:scaleX(0.9688);transform-origin:0 50%;">Help</span>
<span class="t" style="left:221.8px;top:93.2px;font-size:13.5px;letter-spacing:-0.04px;">Name</span>
<span class="t" style="left:447.4px;top:93.2px;font-size:13.5px;transform:scaleX(0.9290);transform-origin:0 50%;">Label</span>
<span class="t" style="left:673.4px;top:93.2px;font-size:13.5px;transform:scaleX(0.9380);transform-origin:0 50%;">Num...</span>
<span class="t" style="left:730.4px;top:93.2px;font-size:13.5px;transform:scaleX(0.9380);transform-origin:0 50%;">Num...</span>
<span class="t" style="left:239.8px;top:117.1px;font-size:13.5px;transform:scaleX(1.0568);transform-origin:0 50%;">bhc-outgoing</span>
<span class="t" style="left:673.6px;top:117.1px;font-size:13.5px;letter-spacing:-0.30px;">0</span>
<span class="t" style="left:730.6px;top:117.1px;font-size:13.5px;letter-spacing:-0.30px;">0</span>
<span class="t" style="left:239.8px;top:138.5px;font-size:13.5px;transform:scaleX(1.0338);transform-origin:0 50%;">bp-admin-test-connection</span>
<span class="t" style="left:673.6px;top:138.5px;font-size:13.5px;letter-spacing:-0.30px;">0</span>
<span class="t" style="left:730.6px;top:138.5px;font-size:13.5px;letter-spacing:-0.30px;">0</span>
<span class="t" style="left:239.8px;top:159.9px;font-size:13.5px;transform:scaleX(1.0407);transform-origin:0 50%;">bp-app-queue</span>
<span class="t" style="left:673.6px;top:159.9px;font-size:13.5px;letter-spacing:-0.30px;">0</span>
<span class="t" style="left:730.6px;top:159.9px;font-size:13.5px;letter-spacing:-0.30px;">0</span>
<span class="t" style="left:239.8px;top:181.3px;font-size:13.5px;transform:scaleX(1.0545);transform-origin:0 50%;">bp-eordering-outgoing</span>
<span class="t" style="left:673.6px;top:181.3px;font-size:13.5px;letter-spacing:-0.30px;">0</span>
<span class="t" style="left:730.6px;top:181.3px;font-size:13.5px;letter-spacing:-0.30px;">0</span>
<span class="t" style="left:239.8px;top:202.7px;font-size:13.5px;transform:scaleX(1.0414);transform-origin:0 50%;">bp-incoming-app-queue</span>
<span class="t" style="left:673.6px;top:202.7px;font-size:13.5px;letter-spacing:-0.30px;">0</span>
<span class="t" style="left:730.6px;top:202.7px;font-size:13.5px;letter-spacing:-0.30px;">0</span>
<span class="t" style="left:239.8px;top:224.1px;font-size:13.5px;transform:scaleX(1.0556);transform-origin:0 50%;">bp-retry</span>
<span class="t" style="left:673.6px;top:224.1px;font-size:13.5px;letter-spacing:-0.30px;">0</span>
<span class="t" style="left:730.6px;top:224.1px;font-size:13.5px;letter-spacing:-0.30px;">0</span>
<span class="t" style="left:239.8px;top:245.5px;font-size:13.5px;transform:scaleX(1.0308);transform-origin:0 50%;">bp-test-connection</span>
<span class="t" style="left:673.6px;top:245.5px;font-size:13.5px;letter-spacing:-0.30px;">0</span>
<span class="t" style="left:730.6px;top:245.5px;font-size:13.5px;letter-spacing:-0.30px;">0</span>
<span class="t" style="left:899.5px;top:92.0px;font-size:13.5px;transform:scaleX(0.9209);transform-origin:0 50%;font-weight:bold;">Actions</span>
<span class="t" style="left:901.5px;top:119.0px;font-size:13.5px;transform:scaleX(0.9467);transform-origin:0 50%;">Private Queues</span>
<span class="t" style="left:928.7px;top:146.1px;font-size:13.5px;">More Actions</span>
<span class="t" style="left:901.5px;top:180.0px;font-size:13.5px;transform:scaleX(1.0556);transform-origin:0 50%;">bhc-outgoing</span>
<span class="t" style="left:928.7px;top:207.1px;font-size:13.5px;">More Actions</span>
<div class="clip" style="width:207.5px;height:742px">
<span class="t" style="left:24.6px;top:89.5px;font-size:13.5px;letter-spacing:-0.21px;">Computer Management (Local)</span>
<span class="t" style="left:46.2px;top:110.0px;font-size:13.5px;transform:scaleX(0.9471);transform-origin:0 50%;">System Tools</span>
<span class="t" style="left:68.1px;top:130.3px;font-size:13.5px;transform:scaleX(0.9262);transform-origin:0 50%;">Task Scheduler</span>
<span class="t" style="left:68.1px;top:150.6px;font-size:13.5px;transform:scaleX(0.9408);transform-origin:0 50%;">Event Viewer</span>
<span class="t" style="left:68.1px;top:170.9px;font-size:13.5px;transform:scaleX(0.9381);transform-origin:0 50%;">Shared Folders</span>
<span class="t" style="left:68.1px;top:191.2px;font-size:13.5px;transform:scaleX(0.9376);transform-origin:0 50%;">Local Users and Groups</span>
<span class="t" style="left:68.1px;top:211.5px;font-size:13.5px;transform:scaleX(0.9522);transform-origin:0 50%;">Performance</span>
<span class="t" style="left:68.1px;top:231.8px;font-size:13.5px;transform:scaleX(0.9624);transform-origin:0 50%;">Device Manager</span>
<span class="t" style="left:46.2px;top:252.1px;font-size:13.5px;transform:scaleX(0.9620);transform-origin:0 50%;">Storage</span>
<span class="t" style="left:68.1px;top:272.4px;font-size:13.5px;letter-spacing:-0.16px;">Disk Management</span>
<span class="t" style="left:46.2px;top:292.7px;font-size:13.5px;transform:scaleX(0.9627);transform-origin:0 50%;">Services and Applications</span>
<span class="t" style="left:68.1px;top:313.0px;font-size:13.5px;transform:scaleX(0.8828);transform-origin:0 50%;">Services</span>
<span class="t" style="left:68.1px;top:333.3px;font-size:13.5px;">WMI Control</span>
<span class="t" style="left:68.1px;top:353.6px;font-size:13.5px;transform:scaleX(0.9456);transform-origin:0 50%;">SQL Server Configuratio</span>
<span class="t" style="left:68.1px;top:373.9px;font-size:13.5px;letter-spacing:-0.21px;">Message Queuing</span>
<span class="t" style="left:88.5px;top:394.2px;font-size:13.5px;letter-spacing:0.07px;">Outgoing Queues</span>
<span class="t" style="left:110.8px;top:414.5px;font-size:13.5px;transform:scaleX(0.8807);transform-origin:0 50%;">DIRECT=OS:WIN \private$</span>
<span class="t" style="left:110.8px;top:434.8px;font-size:13.5px;transform:scaleX(0.8807);transform-origin:0 50%;">DIRECT=OS:WIN \private$</span>
<span class="t" style="left:88.5px;top:455.1px;font-size:13.5px;transform:scaleX(0.9542);transform-origin:0 50%;">Private Queues</span>
<span class="t" style="left:110.8px;top:475.4px;font-size:13.5px;transform:scaleX(1.0479);transform-origin:0 50%;">bhc-outgoing</span>
<span class="t" style="left:110.8px;top:495.7px;font-size:13.5px;transform:scaleX(1.0338);transform-origin:0 50%;">bp-admin-test-connection</span>
<span class="t" style="left:110.8px;top:516.0px;font-size:13.5px;transform:scaleX(1.0371);transform-origin:0 50%;">bp-app-queue</span>
<span class="t" style="left:110.8px;top:536.3px;font-size:13.5px;transform:scaleX(1.0545);transform-origin:0 50%;">bp-eordering-outgoing</span>
<span class="t" style="left:110.8px;top:556.6px;font-size:13.5px;transform:scaleX(1.0414);transform-origin:0 50%;">bp-incoming-app-queue</span>
<span class="t" style="left:110.8px;top:576.9px;font-size:13.5px;transform:scaleX(1.0427);transform-origin:0 50%;">bp-retry</span>
<span class="t" style="left:110.8px;top:597.2px;font-size:13.5px;transform:scaleX(1.0452);transform-origin:0 50%;">bp-test-connection</span>
<span class="t" style="left:88.5px;top:617.5px;font-size:13.5px;transform:scaleX(0.9485);transform-origin:0 50%;">System Queues</span>
<svg style="left:1.1px;top:89.1px" width="17.6" height="17.6"><use href="#cm"/></svg>
<svg style="left:4.5px;top:116.6px" width="11" height="7"><use href="#chd"/></svg>
<svg style="left:4.5px;top:258.7px" width="11" height="7"><use href="#chd"/></svg>
<svg style="left:4.5px;top:299.3px" width="11" height="7"><use href="#chd"/></svg>
<svg style="left:28.7px;top:134.9px" width="7" height="10"><use href="#chr"/></svg>
<svg style="left:28.7px;top:155.2px" width="7" height="10"><use href="#chr"/></svg>
<svg style="left:28.7px;top:175.5px" width="7" height="10"><use href="#chr"/></svg>
<svg style="left:28.7px;top:195.8px" width="7" height="10"><use href="#chr"/></svg>
<svg style="left:28.7px;top:216.1px" width="7" height="10"><use href="#chr"/></svg>
<svg style="left:28.7px;top:358.2px" width="7" height="10"><use href="#chr"/></svg>
<svg style="left:26.0px;top:380.5px" width="11" height="7"><use href="#chd"/></svg>
<svg style="left:47.7px;top:400.8px" width="11" height="7"><use href="#chd"/></svg>
<svg style="left:47.7px;top:461.7px" width="11" height="7"><use href="#chd"/></svg>
<svg style="left:50.2px;top:622.1px" width="7" height="10"><use href="#chr"/></svg>
<svg style="left:71.7px;top:419.1px" width="7" height="10"><use href="#chr"/></svg>
<svg style="left:71.7px;top:439.4px" width="7" height="10"><use href="#chr"/></svg>
<svg style="left:71.7px;top:480.0px" width="7" height="10"><use href="#chr"/></svg>
<svg style="left:71.7px;top:500.3px" width="7" height="10"><use href="#chr"/></svg>
<svg style="left:71.7px;top:520.6px" width="7" height="10"><use href="#chr"/></svg>
<svg style="left:71.7px;top:540.9px" width="7" height="10"><use href="#chr"/></svg>
<svg style="left:71.7px;top:561.2px" width="7" height="10"><use href="#chr"/></svg>
<svg style="left:71.7px;top:581.5px" width="7" height="10"><use href="#chr"/></svg>
<svg style="left:71.7px;top:601.8px" width="7" height="10"><use href="#chr"/></svg>
<svg style="left:24.3px;top:108.6px" width="14" height="19"><use href="#tools"/></svg>
<svg style="left:44.3px;top:130.0px" width="17.6" height="17.6"><use href="#clock"/></svg>
<svg style="left:44.6px;top:150.8px" width="16.6" height="17.4"><use href="#evt"/></svg>
<svg style="left:43.4px;top:171.8px" width="17" height="17"><use href="#shared"/></svg>
<svg style="left:43.6px;top:190.8px" width="19" height="18"><use href="#lusr"/></svg>
<svg style="left:44.2px;top:211.1px" width="17.6" height="17.6"><use href="#perf"/></svg>
<svg style="left:44.6px;top:231.7px" width="16" height="18"><use href="#dev"/></svg>
<svg style="left:21.9px;top:251.0px" width="20" height="19"><use href="#stor"/></svg>
<svg style="left:43.5px;top:272.5px" width="19" height="18"><use href="#disk"/></svg>
<svg style="left:24.6px;top:291.5px" width="17" height="19"><use href="#svcapp"/></svg>
<svg style="left:44.0px;top:312.0px" width="19" height="19"><use href="#svc"/></svg>
<svg style="left:43.8px;top:331.4px" width="19" height="20"><use href="#wmi"/></svg>
<svg style="left:45.0px;top:352.6px" width="16" height="18"><use href="#sql"/></svg>
<svg style="left:43.5px;top:375.2px" width="19" height="16"><use href="#msmq"/></svg>
<svg style="left:65.4px;top:394.6px" width="16" height="15"><use href="#folder"/></svg>
<svg style="left:65.4px;top:455.5px" width="16" height="15"><use href="#folder"/></svg>
<svg style="left:65.4px;top:617.9px" width="16" height="15"><use href="#folder"/></svg>
<svg style="left:86.7px;top:412.9px" width="20" height="19"><use href="#outq"/></svg>
<svg style="left:86.7px;top:433.2px" width="20" height="19"><use href="#outq"/></svg>
<svg style="left:86.7px;top:475.8px" width="19" height="16"><use href="#privq"/></svg>
<svg style="left:86.7px;top:496.1px" width="19" height="16"><use href="#privq"/></svg>
<svg style="left:86.7px;top:516.4px" width="19" height="16"><use href="#privq"/></svg>
<svg style="left:86.7px;top:536.7px" width="19" height="16"><use href="#privq"/></svg>
<svg style="left:86.7px;top:557.0px" width="19" height="16"><use href="#privq"/></svg>
<svg style="left:86.7px;top:577.3px" width="19" height="16"><use href="#privq"/></svg>
<svg style="left:86.7px;top:597.6px" width="19" height="16"><use href="#privq"/></svg>
</div>
<svg style="left:4.5px;top:0.7px" width="17.9" height="17.9"><use href="#cm"/></svg>
<svg style="left:0.7px;top:58.7px" width="18.6" height="16.6"><use href="#tback"/></svg>
<svg style="left:26.9px;top:58.7px" width="18.6" height="16.6"><use href="#tfwd"/></svg>
<svg style="left:62.2px;top:58.7px" width="18.4" height="18.4"><use href="#tup"/></svg>
<svg style="left:88.9px;top:60.7px" width="18" height="15"><use href="#ttree"/></svg>
<svg style="left:122.7px;top:57.1px" width="18" height="18"><use href="#tdel"/></svg>
<svg style="left:149.0px;top:57.2px" width="17" height="19"><use href="#tprop"/></svg>
<svg style="left:176.8px;top:57.1px" width="16" height="19"><use href="#tref"/></svg>
<svg style="left:200.6px;top:57.1px" width="19" height="19"><use href="#texp"/></svg>
<svg style="left:237.0px;top:57.2px" width="14.8" height="18.1"><use href="#thelp"/></svg>
<svg style="left:263.0px;top:60.7px" width="18" height="15"><use href="#tact"/></svg>
<svg style="left:220.1px;top:116.1px" width="18" height="18"><use href="#listqb"/></svg>
<svg style="left:220.1px;top:137.5px" width="18" height="18"><use href="#listq"/></svg>
<svg style="left:220.1px;top:158.9px" width="18" height="18"><use href="#listq"/></svg>
<svg style="left:220.1px;top:180.3px" width="18" height="18"><use href="#listq"/></svg>
<svg style="left:220.1px;top:201.7px" width="18" height="18"><use href="#listq"/></svg>
<svg style="left:220.1px;top:223.1px" width="18" height="18"><use href="#listq"/></svg>
<svg style="left:220.1px;top:244.5px" width="18" height="18"><use href="#listq"/></svg>
<!-- properties dialog -->
<div class="a" style="left:420px;top:275px;width:451.2px;height:520px;box-sizing:border-box;background:#f0f0f0;border:1px solid #cdcdcd;box-shadow:0 0 4px rgba(0,0,0,0.08)"></div>
<div class="a" style="left:421px;top:276px;width:449.5px;height:34px;background:#fff"></div>
<!-- caption glyphs -->
<svg style="left:836px;top:286px" width="16" height="16" viewBox="0 0 16 16"><path d="M1.8 1.2L13.6 13M13.6 1.2L1.8 13" stroke="#111" stroke-width="1.25" fill="none"/></svg>
<!-- tabs -->
<div class="a" style="left:430.5px;top:321px;width:53.5px;height:20px;background:#f4f4f4;border:1px solid #ececec;border-bottom:none;box-sizing:border-box"></div>
<div class="a" style="left:428.8px;top:340.6px;width:433.2px;height:404.6px;background:#f9f9f9;border:1px solid #f3f3f3;box-sizing:border-box"></div>
<div class="a" style="left:484px;top:319px;width:59.5px;height:23px;background:#f9f9f9;border:1px solid #f1f1f1;border-bottom:none;box-sizing:border-box"></div>
<!-- users listbox -->
<div class="a" style="left:444.5px;top:370px;width:402.5px;height:116.8px;box-sizing:border-box;background:#fff;border:1.4px solid #757a88"></div>
<div class="a" style="left:469.5px;top:430px;width:374.5px;height:18px;background:#0078d7"></div>
<!-- add/remove -->
<div class="btn" style="left:669.6px;top:492.9px;width:84.2px;height:25.6px"></div>
<div class="btn" style="left:761px;top:492.9px;width:84px;height:25.6px"></div>
<!-- permissions listbox -->
<div class="a" style="left:444.5px;top:552px;width:402.5px;height:110.5px;box-sizing:border-box;background:#fff;border:1.2px solid #767676"></div>
<div class="a" style="left:449.5px;top:594.9px;width:299.5px;height:42.1px;background:#ffe500"></div>
<div class="a" style="left:826px;top:553px;width:20px;height:108.5px;background:#f0f0f0"></div>
<div class="a" style="left:830.7px;top:571.5px;width:10.5px;height:31.5px;background:#858585"></div>
<!-- checkboxes -->
<div class="cb" style="left:723.3px;top:558.1px"></div><div class="cb" style="left:791.1px;top:558.1px"></div>
<div class="cb" style="left:723.3px;top:578.5px"></div><div class="cb" style="left:791.1px;top:578.5px"></div>
<div class="cbg" style="left:723.3px;top:599.0px"></div><div class="cb" style="left:791.1px;top:599.0px"></div>
<div class="cbg" style="left:723.3px;top:619.4px"></div><div class="cb" style="left:791.1px;top:619.4px"></div>
<div class="cb" style="left:723.3px;top:639.7px"></div><div class="cb" style="left:791.1px;top:639.7px"></div>
<div class="a" style="left:723.3px;top:659.6px;width:14.6px;height:2px;box-sizing:border-box;border:1.2px solid #8a8a8a;border-bottom:none;border-radius:3.5px 3.5px 0 0;background:#f3f3f3"></div>
<div class="a" style="left:791.1px;top:659.6px;width:14.6px;height:2px;box-sizing:border-box;border:1.2px solid #8a8a8a;border-bottom:none;border-radius:3.5px 3.5px 0 0;background:#f3f3f3"></div>
<svg style="left:723.3px;top:599px" width="15" height="36" viewBox="0 0 15 36"><g fill="none" stroke="#f4f8d8" stroke-width="1.05" stroke-linecap="round" stroke-linejoin="round">
<path d="M3.9 7.6L6.3 10L10.8 5.1"/><path d="M3.9 28L6.3 30.4L10.8 25.5"/></g></svg>
<!-- advanced + bottom buttons -->
<div class="btn" style="left:744.5px;top:671.5px;width:100.5px;height:25px"></div>
<div class="btn" style="left:596.5px;top:754px;width:84px;height:24.5px;border-color:#2f86d8"></div>
<div class="btn" style="left:688px;top:754px;width:83.5px;height:24.5px"></div>
<div class="btn" style="left:780px;top:754px;width:82px;height:24.5px;background:#f6f6f6;border-color:#e6e6e6"></div>
<span class="t" style="left:429.7px;top:284.2px;font-size:13.5px;transform:scaleX(1.0325);transform-origin:0 50%;">bhc-outgoing Properties</span>
<span class="t" style="left:787.8px;top:282.3px;font-size:14px;letter-spacing:-0.30px;">?</span>
<span class="t" style="left:436.2px;top:321.9px;font-size:12px;letter-spacing:-0.07px;">General</span>
<span class="t" style="left:491.8px;top:320.1px;font-size:12px;letter-spacing:-0.15px;">Security</span>
<span class="t" style="left:444.3px;top:349.1px;font-size:12px;letter-spacing:-0.07px;">Group or user names:</span>
<span class="t" style="left:471.6px;top:373.1px;font-size:12px;letter-spacing:-0.14px;">Everyone</span>
<span class="t" style="left:471.6px;top:392.1px;font-size:12px;letter-spacing:0.07px;">SYSTEM</span>
<span class="t" style="left:471.6px;top:411.1px;font-size:12px;letter-spacing:-0.10px;">Administrators (michaelwhite001\Administrators)</span>
<span class="t" style="left:471.6px;top:430.0px;font-size:12px;letter-spacing:0.06px;color:#fff;">ANONYMOUS LOGON</span>
<span class="t" style="left:694.9px;top:496.8px;font-size:12px;letter-spacing:0.19px;">Add...</span>
<span class="t" style="left:779.1px;top:496.8px;font-size:12px;letter-spacing:0.12px;">Remove</span>
<span class="t" style="left:444.3px;top:531.4px;font-size:12px;letter-spacing:-0.02px;">Permissions for ANONYMOUS LOGON</span>
<span class="t" style="left:720.2px;top:531.4px;font-size:12px;letter-spacing:0.15px;">Allow</span>
<span class="t" style="left:790.0px;top:531.4px;font-size:12px;letter-spacing:0.26px;">Deny</span>
<span class="t" style="left:457.8px;top:556.3px;font-size:12px;letter-spacing:-0.07px;">Full Control</span>
<span class="t" style="left:457.8px;top:576.8px;font-size:12px;letter-spacing:0.12px;">Delete</span>
<span class="t" style="left:457.8px;top:597.3px;font-size:12px;letter-spacing:-0.03px;">Receive Message</span>
<span class="t" style="left:457.8px;top:617.7px;font-size:12px;">Peek Message</span>
<span class="t" style="left:457.8px;top:638.1px;font-size:12px;letter-spacing:-0.07px;">Receive Journal Message</span>
<span class="t" style="left:444.3px;top:669.5px;font-size:12px;letter-spacing:-0.12px;">For special permissions or advanced settings, click</span>
<span class="t" style="left:444.3px;top:684.4px;font-size:12px;letter-spacing:-0.06px;">Advanced.</span>
<span class="t" style="left:766.9px;top:675.1px;font-size:12px;letter-spacing:0.03px;">Advanced</span>
<span class="t" style="left:629.4px;top:757.2px;font-size:12px;letter-spacing:0.46px;">OK</span>
<span class="t" style="left:710.5px;top:757.2px;font-size:12px;transform:scaleX(1.0332);transform-origin:0 50%;">Cancel</span>
<span class="t" style="left:805.9px;top:757.2px;font-size:12px;letter-spacing:-0.03px;color:#a2a2a2;">Apply</span>
<svg style="left:451.1px;top:372.8px" width="18.6" height="16.6"><use href="#usr"/></svg>
<svg style="left:451.1px;top:391.8px" width="18.6" height="16.6"><use href="#usr"/></svg>
<svg style="left:451.1px;top:410.8px" width="18.6" height="16.6"><use href="#usr"/></svg>
<svg style="left:451.1px;top:429.8px" width="18.6" height="16.6"><use href="#usrb"/></svg>
</body></html>
